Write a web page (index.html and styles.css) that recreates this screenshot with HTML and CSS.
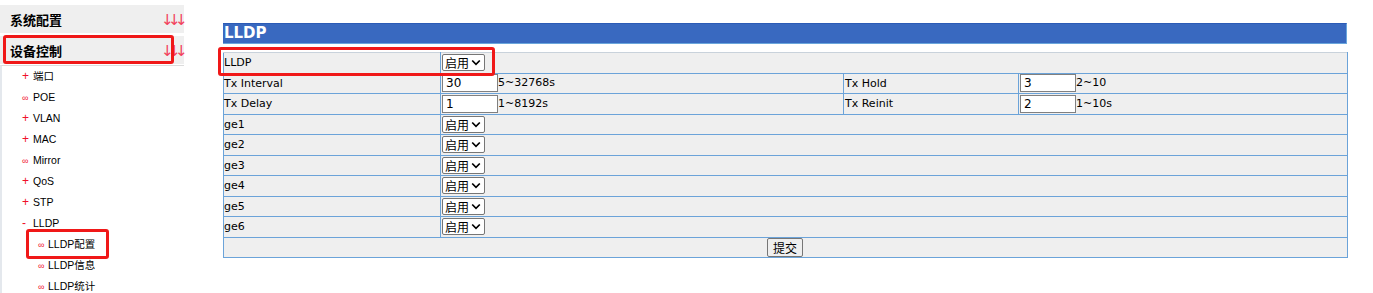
FILE: index.html
```html
<!DOCTYPE html>
<html lang="zh-CN">
<head>
  <meta charset="UTF-8" />
  <title>LLDP配置</title>
  <link rel="stylesheet" href="styles.css">
</head>
<body>
  <div class="page">
    <!-- 左侧菜单 -->
    <aside class="sidebar">
      <div class="nav-head"><span>系统配置</span><span class="arrows">↓↓↓</span></div>
      <div class="nav-head"><span>设备控制</span><span class="arrows">↓↓↓</span><span class="mark mark-head"></span></div>
      <ul class="menu">
        <li><span class="ico">+</span>端口</li>
        <li><span class="ico ico-inf">∞</span>POE</li>
        <li><span class="ico">+</span>VLAN</li>
        <li><span class="ico">+</span>MAC</li>
        <li><span class="ico ico-inf">∞</span>Mirror</li>
        <li><span class="ico">+</span>QoS</li>
        <li><span class="ico">+</span>STP</li>
        <li><span class="ico">-</span>LLDP</li>
        <li class="sub"><span class="ico ico-inf">∞</span>LLDP配置<span class="mark mark-sub"></span></li>
        <li class="sub"><span class="ico ico-inf">∞</span>LLDP信息</li>
        <li class="sub"><span class="ico ico-inf">∞</span>LLDP统计</li>
      </ul>
    </aside>

    <!-- 主内容 -->
    <main class="content">
      <div class="title">LLDP</div>
      <div class="form-wrap">
        <table class="form">
          <colgroup>
            <col class="c-label">
            <col class="c-value">
            <col class="c-label2">
            <col class="c-value2">
          </colgroup>
          <tr>
            <td>LLDP</td>
            <td colspan="3"><select><option>启用</option><option>禁用</option></select></td>
          </tr>
          <tr>
            <td>Tx Interval</td>
            <td><input type="text" value="30">5~32768s</td>
            <td>Tx Hold</td>
            <td><input type="text" value="3">2~10</td>
          </tr>
          <tr>
            <td>Tx Delay</td>
            <td><input type="text" value="1">1~8192s</td>
            <td>Tx Reinit</td>
            <td><input type="text" value="2">1~10s</td>
          </tr>
          <tr>
            <td>ge1</td>
            <td colspan="3"><select><option>启用</option><option>禁用</option></select></td>
          </tr>
          <tr>
            <td>ge2</td>
            <td colspan="3"><select><option>启用</option><option>禁用</option></select></td>
          </tr>
          <tr>
            <td>ge3</td>
            <td colspan="3"><select><option>启用</option><option>禁用</option></select></td>
          </tr>
          <tr>
            <td>ge4</td>
            <td colspan="3"><select><option>启用</option><option>禁用</option></select></td>
          </tr>
          <tr>
            <td>ge5</td>
            <td colspan="3"><select><option>启用</option><option>禁用</option></select></td>
          </tr>
          <tr>
            <td>ge6</td>
            <td colspan="3"><select><option>启用</option><option>禁用</option></select></td>
          </tr>
          <tr class="submit-row">
            <td colspan="4"><button type="button">提交</button></td>
          </tr>
        </table>
        <span class="mark mark-row"></span>
      </div>
    </main>
  </div>
</body>
</html>
```

FILE: styles.css
```css
* {
  box-sizing: border-box;
}

body {
  margin: 0;
  background: #fff;
  color: #000;
  font-family: "Liberation Sans", "Noto Sans CJK SC", sans-serif;
}

.page {
  display: flex;
  align-items: flex-start;
}

/* 左侧菜单 */
.sidebar {
  width: 184px;
  flex: none;
  padding-top: 5px;
}

.nav-head {
  position: relative;
  display: flex;
  justify-content: space-between;
  align-items: center;
  height: 28px;
  margin-bottom: 3px;
  padding: 1px 0 0 10px;
  background: #efefef;
  font: bold 13px "Noto Sans CJK SC", sans-serif;
  line-height: 1;
}

.arrows {
  color: #f2415c;
  font: 15px "DejaVu Sans", sans-serif;
  letter-spacing: -5.6px;
  padding-right: 2px;
}

.menu {
  list-style: none;
  margin: -2px 0 0;
  padding: 0;
  border-top: 1px solid #dcdcdc;
  border-left: 2px solid #e4e8ed;
}

.menu li {
  position: relative;
  height: 21px;
  line-height: 21px;
  padding-left: 20px;
  font-size: 10.5px;
}

.menu li.sub {
  padding-left: 36px;
}

.ico {
  display: inline-block;
  width: 11px;
  color: #f0102a;
  font-size: 12px;
}

.ico-inf {
  font-size: 9px;
  width: 11px;
}

.menu li.sub .ico {
  width: 10px;
}

/* 红色标注框 */
.mark {
  position: absolute;
  border: 3px solid #f01818;
  border-radius: 3px;
  pointer-events: none;
}

.mark-head {
  left: 3px;
  top: -1px;
  width: 171px;
  height: 29px;
}

.mark-sub {
  left: 24px;
  top: -5px;
  width: 83px;
  height: 30px;
}

/* 主内容 */
.content {
  width: 1124px;
  margin-left: 39px;
  padding-top: 23px;
}

.title {
  height: 21px;
  line-height: 20px;
  padding-left: 1px;
  background: #3969c0;
  border-top: 1px solid #2c5bb6;
  border-right: 1px solid #6aa6dc;
  border-bottom: 1px solid #6aa6dc;
  color: #fff;
  font: bold 15px "DejaVu Sans", sans-serif;
}

.form-wrap {
  position: relative;
  margin-top: 8px;
}

.mark-row {
  left: -5px;
  top: -5px;
  width: 277px;
  height: 29px;
}

.form {
  width: 100%;
  border-collapse: collapse;
  table-layout: fixed;
  background: #efefef;
  font: 11px "DejaVu Sans", "Noto Sans CJK SC", sans-serif;
}

.c-label { width: 217px; }
.c-value { width: 403px; }
.c-label2 { width: 175px; }
.c-value2 { width: 329px; }

.form tr {
  height: 20.5px;
}

.form td {
  padding: 0 1px;
  border: 1px solid #6ba3d9;
  vertical-align: middle;
  white-space: nowrap;
}

.form tr:first-child td {
  border-top-color: #c9d2db;
}

.form td:first-child {
  padding-left: 0;
}

.form input {
  width: 56px;
  height: 18px;
  margin: 0;
  padding: 0 3px;
  border: 1px solid #808080;
  background: #fff;
  font: 12px "DejaVu Sans", sans-serif;
  vertical-align: middle;
}

.form select {
  appearance: none;
  -webkit-appearance: none;
  width: 43px;
  height: 17px;
  margin: 0;
  padding: 0 0 0 2px;
  border: 1px solid #767676;
  border-radius: 2px;
  background: #fff url("data:image/svg+xml,%3Csvg xmlns='http://www.w3.org/2000/svg' width='10' height='7'%3E%3Cpath d='M1.2 1.5l3.8 3.8 3.8-3.8' fill='none' stroke='%23000' stroke-width='1.7'/%3E%3C/svg%3E") no-repeat right 3px center;
  font: 12px "Noto Sans CJK SC", sans-serif;
  line-height: 15px;
  vertical-align: middle;
}

.submit-row td {
  text-align: center;
}

.submit-row button {
  height: 19px;
  padding: 0 5px;
  border: 1px solid #767676;
  border-radius: 2px;
  background: #efefef;
  font: 12px "Noto Sans CJK SC", sans-serif;
  line-height: 15px;
}
```
